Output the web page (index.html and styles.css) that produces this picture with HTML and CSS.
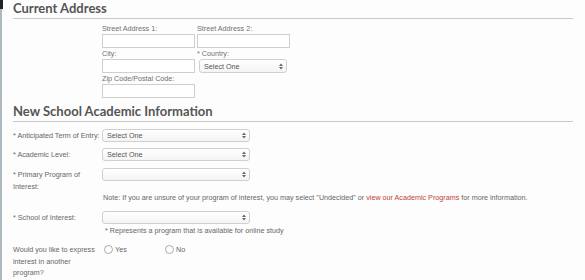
FILE: index.html
```html
<!DOCTYPE html>
<html>
<head>
<meta charset="utf-8">
<link rel="stylesheet" href="styles.css">
</head>
<body>
<div class="page">
  <section class="sec">
    <h2 class="sec-title">Current Address</h2>
    <div class="addr">
      <div class="field"><label class="flabel">Street Address 1:</label><input class="txt" type="text"></div>
      <div class="field"><label class="flabel">Street Address 2:</label><input class="txt" type="text"></div>
      <div class="field"><label class="flabel">City:</label><input class="txt" type="text"></div>
      <div class="field"><label class="flabel">* Country:</label>
        <span class="sel sel-sm"><select class="sel-input"><option>Select One</option></select>
          <svg class="sel-arrow" width="4" height="7" viewBox="0 0 4 7"><path d="M0 3 L2 0.5 L4 3 Z M0 4 L2 6.5 L4 4 Z" fill="#666"/></svg>
        </span>
      </div>
      <div class="field"><label class="flabel">Zip Code/Postal Code:</label><input class="txt" type="text"></div>
    </div>
  </section>

  <section class="sec sec-academic">
    <h2 class="sec-title">New School Academic Information</h2>
    <div class="rows">
      <div class="row r1">
        <label class="rlabel">* Anticipated Term of Entry:</label>
        <div class="ctrl">
          <span class="sel"><select class="sel-input"><option>Select One</option></select>
            <svg class="sel-arrow" width="4" height="7" viewBox="0 0 4 7"><path d="M0 3 L2 0.5 L4 3 Z M0 4 L2 6.5 L4 4 Z" fill="#666"/></svg>
          </span>
        </div>
      </div>
      <div class="row r2">
        <label class="rlabel">* Academic Level:</label>
        <div class="ctrl">
          <span class="sel"><select class="sel-input"><option>Select One</option></select>
            <svg class="sel-arrow" width="4" height="7" viewBox="0 0 4 7"><path d="M0 3 L2 0.5 L4 3 Z M0 4 L2 6.5 L4 4 Z" fill="#666"/></svg>
          </span>
        </div>
      </div>
      <div class="row r3">
        <label class="rlabel rlabel-narrow">* Primary Program of Interest:</label>
        <div class="ctrl">
          <span class="sel"><select class="sel-input"><option></option></select>
            <svg class="sel-arrow" width="4" height="7" viewBox="0 0 4 7"><path d="M0 3 L2 0.5 L4 3 Z M0 4 L2 6.5 L4 4 Z" fill="#666"/></svg>
          </span>
          <p class="note">Note: If you are unsure of your program of interest, you may select "Undecided" or <a class="link" href="#">view our Academic Programs</a> for more information.</p>
        </div>
      </div>
      <div class="row r4">
        <label class="rlabel">* School of Interest:</label>
        <div class="ctrl">
          <span class="sel"><select class="sel-input"><option></option></select>
            <svg class="sel-arrow" width="4" height="7" viewBox="0 0 4 7"><path d="M0 3 L2 0.5 L4 3 Z M0 4 L2 6.5 L4 4 Z" fill="#666"/></svg>
          </span>
          <p class="hint">* Represents a program that is available for online study</p>
        </div>
      </div>
      <div class="row r5">
        <label class="rlabel rlabel-tight rlabel-narrow">Would you like to express interest in another program?</label>
        <div class="ctrl radios">
          <label class="radio"><span class="dot"></span>Yes</label>
          <label class="radio"><span class="dot"></span>No</label>
        </div>
      </div>
    </div>
  </section>
</div>
</body>
</html>
```

FILE: styles.css
```css
html, body {
  margin: 0;
  padding: 0;
  background: #ffffff;
}

body {
  font-family: "Liberation Sans", Arial, sans-serif;
  color: #666;
  width: 585px;
  height: 280px;
  overflow: hidden;
}

.page {
  position: relative;
  border-left: 2px solid #aeb8bf;
  padding: 0 12px 0 11px;
  height: 280px;
  background: #fdfdfd;
  box-sizing: border-box;
}

.page::before {
  content: "";
  position: absolute;
  left: -2px;
  top: 0;
  width: 3px;
  height: 9px;
  background: #222;
}

.sec-title {
  margin: 0;
  font-family: Lato, "Open Sans", sans-serif;
  font-weight: 700;
  font-size: 13px;
  line-height: 16px;
  color: #555;
  padding-bottom: 2px;
  border-bottom: 1px solid #c9c9c9;
}

.sec-academic {
  margin-top: 5px;
}

.addr {
  margin-top: 4px;
  margin-left: 89px;
  display: grid;
  grid-template-columns: 93px 93px;
  column-gap: 2px;
}

.field {
  display: flex;
  flex-direction: column;
  align-items: flex-start;
}

.flabel {
  font-size: 7.2px;
  line-height: 11px;
  color: #707070;
}

.txt {
  display: block;
  box-sizing: border-box;
  width: 93px;
  height: 14px;
  margin: 0;
  padding: 0 3px;
  border: 1px solid #cfcfcf;
  background: #fff;
  font-size: 7px;
  outline: none;
}

.sel {
  position: relative;
  display: block;
  width: 148px;
  height: 13px;
}

.sel-sm {
  width: 88px;
  height: 14px;
  margin-left: 2px;
}

.sel-input {
  display: block;
  -webkit-appearance: none;
  appearance: none;
  box-sizing: border-box;
  width: 100%;
  height: 100%;
  margin: 0;
  padding: 0 0 0 4px;
  border: 1px solid #d0d0d0;
  border-radius: 3px;
  background: linear-gradient(#ffffff, #f4f4f4);
  font-family: "Liberation Sans", Arial, sans-serif;
  font-size: 7.2px;
  line-height: 11px;
  color: #555;
  outline: none;
}

.sel-arrow {
  position: absolute;
  right: 4px;
  top: 50%;
  margin-top: -3.5px;
}

.rows {
  margin-top: 7px;
}

.row {
  display: grid;
  grid-template-columns: 89px auto;
  align-items: start;
}

.r1 { margin-bottom: 6px; }
.r2 { margin-bottom: 7px; }
.r3 { margin-bottom: 8px; }
.r4 { margin-bottom: 8px; }

.rlabel {
  font-size: 7.2px;
  line-height: 12px;
  color: #666;
  margin-top: 0.5px;
}

.rlabel-tight {
  line-height: 11.5px;
  margin-top: 0;
}

.rlabel-narrow {
  max-width: 84px;
}

.ctrl {
  display: flex;
  flex-direction: column;
  align-items: flex-start;
}

.note {
  margin: 12px 0 0 1px;
  font-size: 7.2px;
  line-height: 10px;
  color: #666;
  white-space: nowrap;
}

.link {
  color: #c0413b;
  text-decoration: none;
}

.hint {
  margin: 2px 0 0 3px;
  font-size: 7.2px;
  line-height: 10px;
  color: #666;
}

.radios {
  flex-direction: row;
  align-items: center;
  height: 11.5px;
  padding-left: 2px;
}

.radio {
  display: flex;
  align-items: center;
  width: 61px;
  font-size: 7.2px;
  color: #666;
}

.dot {
  box-sizing: border-box;
  width: 9px;
  height: 9px;
  border: 1px solid #a9a9a9;
  border-radius: 50%;
  background: #fff;
  margin-right: 2px;
}
```
